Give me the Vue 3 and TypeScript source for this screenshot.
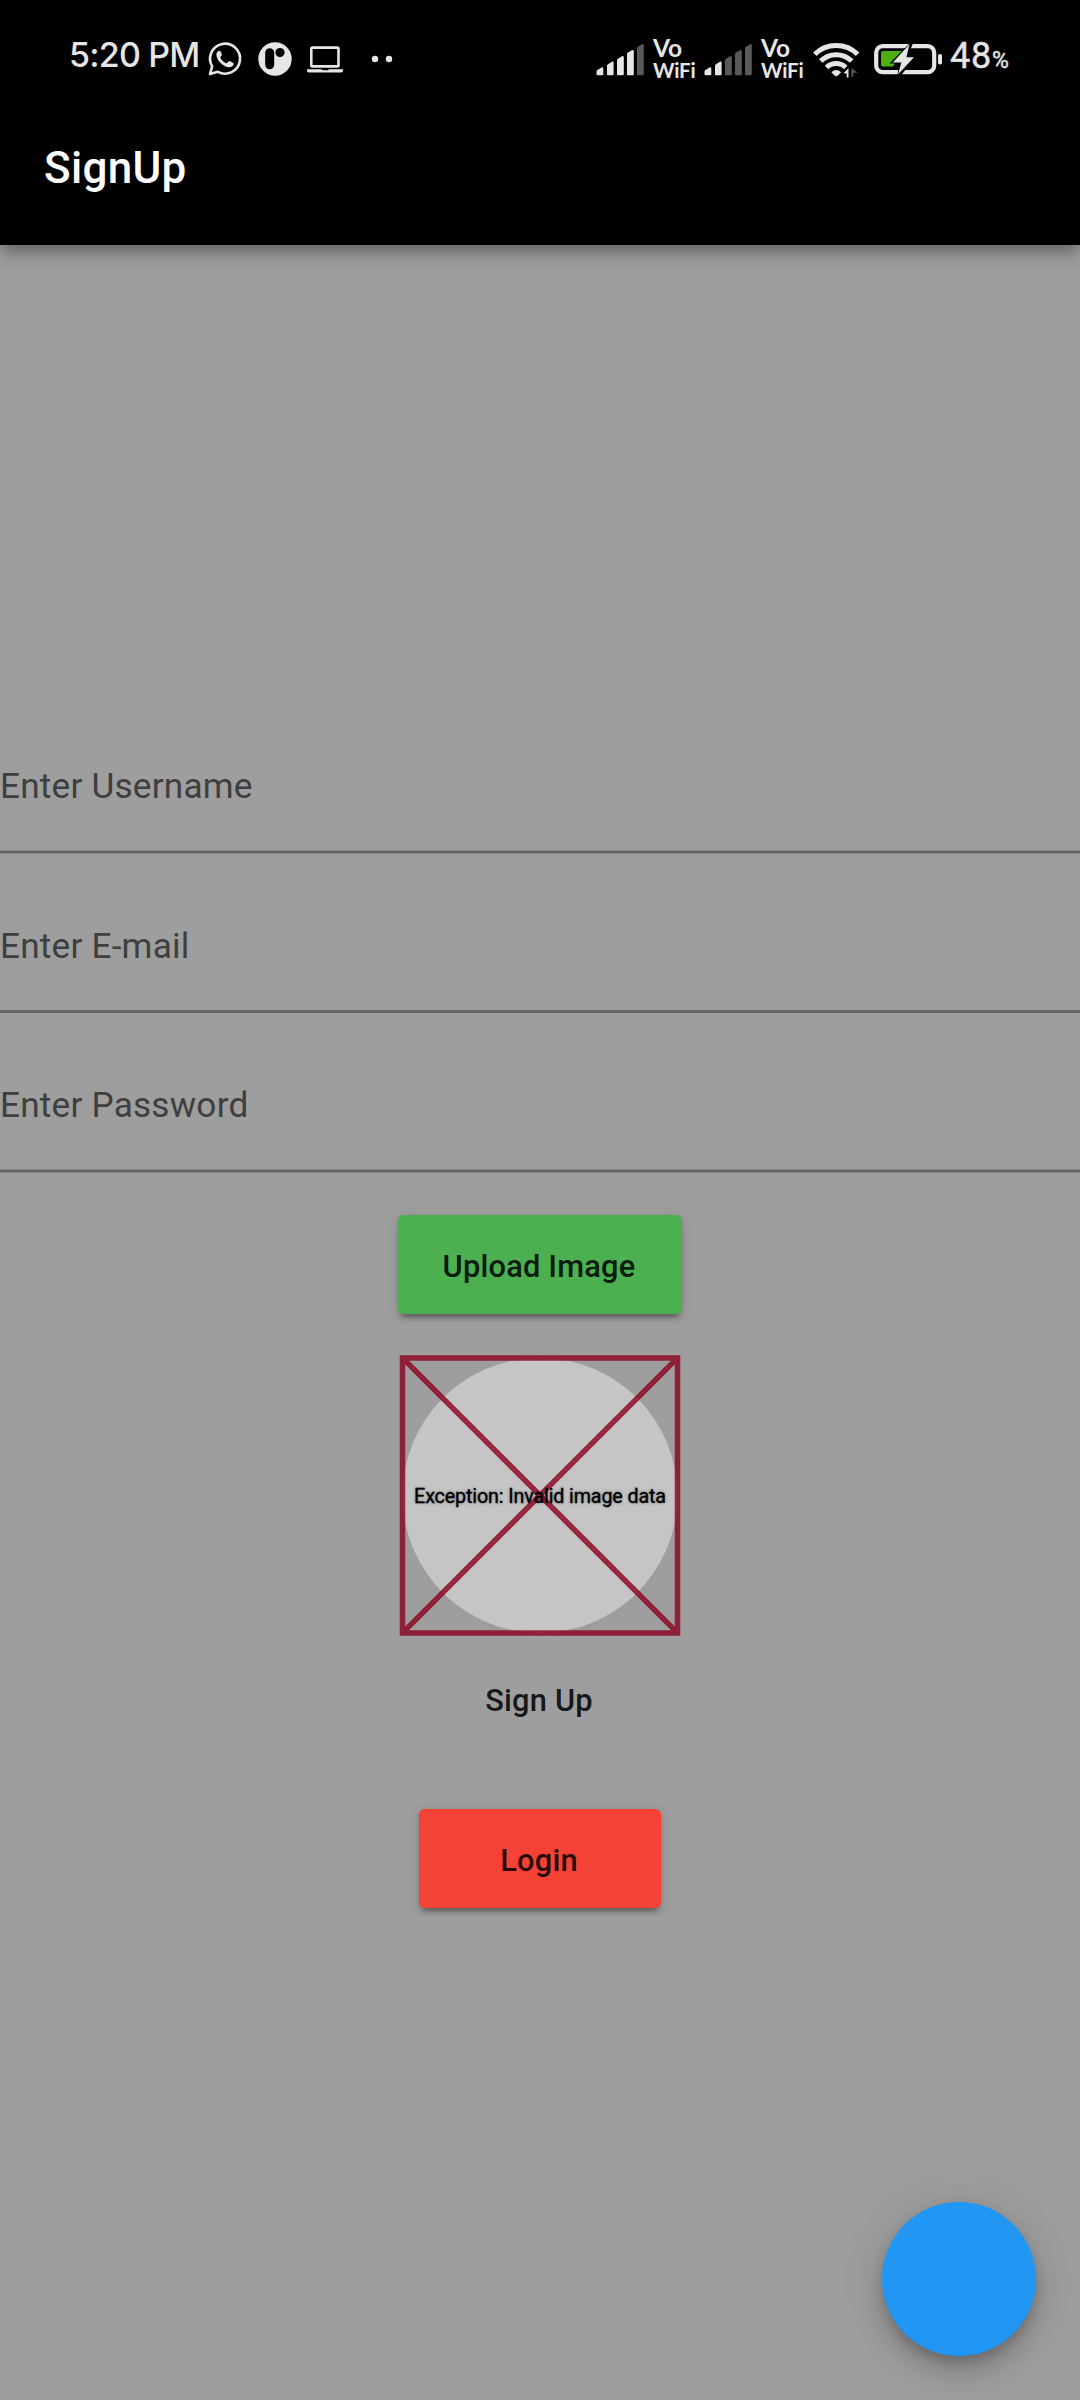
<script setup lang="ts">
interface Field {
  label: string
  name: string
  crisp: boolean
}

const fields: Field[] = [
  { label: 'Enter Username', name: 'username', crisp: false },
  { label: 'Enter E-mail', name: 'email', crisp: true },
  { label: 'Enter Password', name: 'password', crisp: false },
]

const signals = [{ level: 4 }, { level: 2 }]

const bars = [
  'M0.5 31V27.5Q0.5 26.5 1.5 25.8L5.5 23.3Q7.3 22.4 7.3 24.5V30Q7.3 31 6.3 31H1.5Q0.5 31 0.5 30Z',
  'M11 30V21.5Q11 20.5 12 19.9L15.8 17.6Q17.6 16.7 17.6 18.8V30Q17.6 31 16.6 31H12Q11 31 11 30Z',
  'M21 30V16Q21 15 22 14.4L25.9 12Q27.8 11 27.8 13.2V30Q27.8 31 26.8 31H22Q21 31 21 30Z',
  'M31 30V9.9Q31 8.9 32 8.3L35.9 6Q37.8 5 37.8 7.2V30Q37.8 31 36.8 31H32Q31 31 31 30Z',
  'M41 30V4Q41 3 42 2.4L46 0Q47.8 -1 47.8 1.2V30Q47.8 31 46.8 31H42Q41 31 41 30Z',
]
</script>

<template>
  <div class="screen">
    <header class="top">
      <div class="status">
        <span class="time">5:20 PM</span>
        <svg class="whatsapp" width="36" height="36" viewBox="0 0 36 36">
          <path d="M3 33L5.2 25.4A15 15 0 1 1 10.8 30.8Z" fill="none" stroke="#e6e6e6" stroke-width="2.6" stroke-linejoin="round" />
          <path d="M12.2 9.8C10.8 9.9 9.2 12 9.4 14.2C10 19.8 16.5 26 22 26.3C24.5 26.3 26.8 24.6 26.7 22.7C26.7 21.9 22.6 19.9 22 20C21.2 20.2 20.3 22.5 19.5 22.3C17.3 21.7 14.2 18.9 13.3 16.5C13.1 15.8 14.9 14.6 14.9 13.9C14.9 13.1 13.5 9.9 12.9 9.8Z" fill="#e6e6e6" />
        </svg>
        <svg class="pill" width="34" height="34" viewBox="0 0 34 34">
          <circle cx="17" cy="17" r="16.7" fill="#e6e6e6" />
          <rect x="7.2" y="6.2" width="9" height="21" rx="4.5" fill="#000" />
          <circle cx="22" cy="10.6" r="4.6" fill="#000" />
        </svg>
        <svg class="laptop" width="36" height="28" viewBox="0 0 36 28">
          <rect x="4.3" y="1.6" width="27.2" height="18.8" rx="1.2" fill="none" stroke="#e6e6e6" stroke-width="2.6" />
          <path d="M0 23.2H14.5Q15 24.3 16 24.3H20.5Q21.5 24.3 22 23.2H36V25Q35.5 26.5 33.5 26.5H2.5Q0.5 26.5 0 25Z" fill="#e6e6e6" />
        </svg>
        <svg class="dots" width="22" height="8" viewBox="0 0 22 8">
          <circle cx="4" cy="4" r="3.2" fill="#e6e6e6" />
          <circle cx="18" cy="4" r="3.2" fill="#e6e6e6" />
        </svg>
        <div v-for="(signal, i) in signals" :key="i" class="signal">
          <svg width="48" height="32" viewBox="0 0 48 31.5">
            <path v-for="(d, n) in bars" :key="n" :d="d" :fill="n < signal.level ? '#e6e6e6' : '#595959'" />
          </svg>
          <div class="vowifi"><span class="vo">Vo</span><span class="wf">WiFi</span></div>
        </div>
        <svg class="wifi" width="47" height="36" viewBox="0 0 47 36">
          <g fill="none" stroke="#e6e6e6" stroke-width="5">
            <path d="M1.8 13.2A30.5 30.5 0 0 1 44.6 13.2" />
            <path d="M7.7 20.1A22 22 0 0 1 38.7 20.1" />
            <path d="M13.6 26.5A13.8 13.8 0 0 1 32.8 26.5" />
          </g>
          <path d="M18.3 31.3Q23.2 26.6 28.2 31.3L24.5 34.7Q23.2 35.8 21.9 34.7Z" fill="#e6e6e6" />
          <path d="M31.2 31.5L35.5 27.2V36.5H33.7V32.5H31.2Z" fill="#e6e6e6" />
          <path d="M38.5 27V35.8H40.3V31.8H44.5Z" fill="#595959" />
        </svg>
        <svg class="battery" width="70" height="34" viewBox="0 0 70 34">
          <rect x="2.2" y="4.2" width="58" height="26" rx="6.5" fill="none" stroke="#e6e6e6" stroke-width="4.2" />
          <path d="M9 9H29L19 24.5H9Q7 24.5 7 22.5V11Q7 9 9 9Z" fill="#4cb010" />
          <path d="M37 0L15.5 21.5H25L23.5 33L27 33.5L42.5 13.5H34L39.5 0Z" fill="#000" />
          <path d="M35.5 2.2L18.8 20.5H27.4L24 32.5L40 15.2H32.4Z" fill="#e6e6e6" />
          <rect x="64" y="12" width="4" height="10.5" rx="1.8" fill="#e6e6e6" />
        </svg>
        <span class="percent">48<small>%</small></span>
      </div>
      <h1>SignUp</h1>
    </header>

    <main>
      <div v-for="field in fields" :key="field.name" class="field">
        <span>{{ field.label }}</span>
        <i :class="{ crisp: field.crisp }"></i>
      </div>

      <button class="btn upload">Upload Image</button>

      <div class="avatar">
        <svg width="282" height="282" viewBox="-3.5 -3.9 282 282">
          <circle cx="137.5" cy="137.5" r="137.5" fill="#c5c5c5" />
          <path d="M0 0H275V275H0ZL275 275M275 0L0 275" fill="none" stroke="#8d021f" stroke-opacity="0.81" stroke-width="5.5" />
        </svg>
        <span>Exception: Invalid image data</span>
      </div>

      <button class="btn flat">Sign Up</button>
      <button class="btn login">Login</button>
    </main>

    <button class="fab" aria-label="Add"></button>
  </div>
</template>

<style>
body {
  margin: 0;
}
</style>

<style scoped>
.screen {
  position: relative;
  width: 1080px;
  height: 2400px;
  overflow: hidden;
  background: #9e9e9e;
  font-family: Roboto, sans-serif;
}

.top {
  height: 245px;
  background: #000;
  box-shadow: 0 5.5px 11px -2.75px rgba(0, 0, 0, 0.2), 0 11px 13.75px rgba(0, 0, 0, 0.14), 0 2.75px 27.5px rgba(0, 0, 0, 0.12);
}

.status {
  display: flex;
  align-items: flex-start;
  height: 112px;
  color: #e6e6e6;
}

.status svg {
  flex: none;
  display: block;
  overflow: visible;
}

.time {
  flex: none;
  width: 138px;
  margin: 35px 0 0 69px;
  font: 500 34px/40px Inter, sans-serif;
  letter-spacing: -0.8px;
  white-space: nowrap;
}

.whatsapp { margin: 41px 0 0 0; }
.pill { margin: 42px 0 0 15px; }
.laptop { margin: 46px 0 0 15px; }
.dots { margin: 55px 203px 0 28px; }

.signal {
  display: flex;
  flex: none;
  width: 108px;
  margin-top: 44px;
}

.vowifi {
  display: flex;
  flex-direction: column;
  margin: -8px 0 0 9px;
  font: 700 20px/21px Lato, sans-serif;
  white-space: nowrap;
}

.vo {
  font-size: 24.5px;
  line-height: 23px;
}

.wf {
  font-size: 20.5px;
  line-height: 22px;
  letter-spacing: -0.2px;
}

.wifi { margin: 41px 0 0 1px; }
.battery { margin: 42px 0 0 14px; }

.percent {
  margin: 36px 0 0 6px;
  font: 400 36px/40px Roboto, sans-serif;
  letter-spacing: 0.7px;
  white-space: nowrap;
  -webkit-text-stroke: 0.4px #e6e6e6;
}

.percent small {
  font-size: 23px;
}

h1 {
  margin: 28px 0 0 44px;
  color: #fff;
  font: 500 44px/56px Roboto, sans-serif;
  letter-spacing: 0.3px;
}

main {
  display: flex;
  flex-direction: column;
  align-items: center;
  padding-top: 450px;
}

.field {
  display: flex;
  flex-direction: column;
  width: 100%;
  height: 159.5px;
}

.field span {
  margin-top: 71px;
  height: 84px;
  color: #3f3f3f;
  font-size: 35.2px;
  line-height: 41px;
  letter-spacing: 0.2px;
}

.field i {
  height: 4px;
  background: linear-gradient(#878787 1px, #626262 1px, #626262 3px, #878787 3px);
}

.field i.crisp {
  height: 3px;
  background: #666;
}

.btn {
  height: 99px;
  padding: 5px 2px 0 0;
  border: 0;
  border-radius: 5.5px;
  color: rgba(0, 0, 0, 0.87);
  font: 500 30.8px/36px Roboto, sans-serif;
  letter-spacing: 0.2px;
  box-shadow: 0 8px 3px -5px rgba(0, 0, 0, 0.2), 0 5px 5px rgba(0, 0, 0, 0.14), 0 2px 12px rgba(0, 0, 0, 0.12);
}

.upload {
  width: 284px;
  margin-top: 41.5px;
  background: #4caf50;
}

.avatar {
  position: relative;
  width: 282px;
  height: 282px;
  margin-top: 40px;
}

.avatar svg { display: block; }

.avatar span {
  position: absolute;
  left: 0;
  right: 0;
  top: 131px;
  color: #000;
  font-size: 19.7px;
  font-weight: 400;
  line-height: 24px;
  letter-spacing: -0.13px;
  text-align: center;
  white-space: nowrap;
  -webkit-text-stroke: 0.3px #000;
  text-shadow: 0 0 3px rgba(0, 0, 0, 0.5);
}

.flat {
  margin-top: 13px;
  background: transparent;
  box-shadow: none;
}

.login {
  width: 242px;
  margin-top: 61px;
  background: #f44336;
}

.fab {
  position: absolute;
  left: 882px;
  top: 2202px;
  width: 154px;
  height: 154px;
  padding: 0;
  border: 0;
  border-radius: 50%;
  background: #2196f3;
  box-shadow: 0 8px 14px -3px rgba(0, 0, 0, 0.2), 0 16.5px 27.5px rgba(0, 0, 0, 0.14), 0 3px 49px rgba(0, 0, 0, 0.12);
}
</style>
